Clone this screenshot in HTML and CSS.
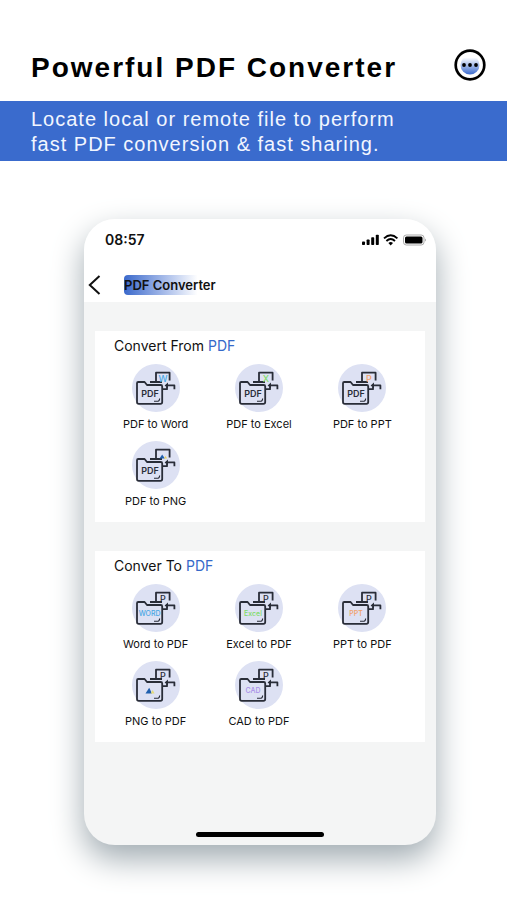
FILE: index.html
```html
<!DOCTYPE html>
<html lang="en">
<head>
<meta charset="utf-8">
<meta name="viewport" content="width=device-width, initial-scale=1">
<title>Powerful PDF Converter</title>
<link rel="stylesheet" href="styles.css">
</head>
<body>
<svg class="defs" aria-hidden="true">
  <defs>
    <symbol id="folder" viewBox="0 0 48 48">
      <circle cx="24" cy="24" r="24" fill="#dde1f3"/>
      <g fill="none" stroke="#292d38" stroke-width="1.8" stroke-linejoin="round">
        <path d="M24 18V8.7H37.6V16.5M18 18H30M30 25.2H35V23"/>
        <path d="M5 38V19.2Q5 18 6.2 18H12.6L15 21H28.8Q30.2 21 30.2 22.4V38Q30.2 39.8 28.4 39.8H6.8Q5 39.8 5 38Z"/>
        <path d="M34 21.4H42.4V25.2"/>
        <path d="M22 37.2H26Q27.6 37 27.6 34.5" stroke-width="1.1"/>
      </g>
      <path d="M32.6 21.4L36 18.6V24.2Z" fill="#292d38"/>
    </symbol>
  </defs>
</svg>
<header class="hero">
  <h1>Powerful PDF Converter</h1>
  <button class="more" type="button" aria-label="More">
    <svg viewBox="0 0 32 32" width="32" height="32" aria-hidden="true">
      <defs><linearGradient id="fade" x1="0" y1="0" x2="0" y2="1"><stop offset=".1" stop-color="#fff"/><stop offset="1" stop-color="#3b6bcf"/></linearGradient></defs>
      <circle cx="16" cy="16" r="14.3" fill="#fff" stroke="#000" stroke-width="2.7"/>
      <circle cx="16" cy="16" r="9.5" fill="url(#fade)"/>
      <circle cx="10" cy="16" r="1.9"/><circle cx="16" cy="16" r="1.9"/><circle cx="22" cy="16" r="1.9"/>
    </svg>
  </button>
</header>
<p class="banner">Locate local or remote file to perform<br>fast PDF conversion &amp; fast sharing.</p>
<main class="phone">
  <div class="top">
    <div class="status">
      <span>08:57</span>
      <svg viewBox="0 0 64 12" width="64" height="12" aria-hidden="true">
        <rect y="7.5" width="3" height="3.5" rx=".8"/><rect x="4.6" y="5.5" width="3" height="5.5" rx=".8"/><rect x="9.2" y="3.2" width="3" height="7.8" rx=".8"/><rect x="13.8" y=".8" width="3" height="10.2" rx=".8"/>
        <g fill="none" stroke="#000" stroke-width="1.9"><path d="M22 4.4Q28.7-1.8 35.4 4.4"/><path d="M24.4 7Q28.7 3.2 33 7"/></g>
        <path d="M26.4 9Q28.7 7 31 9L28.7 11.4Z"/>
        <rect x="41.5" y="1" width="20.5" height="10" rx="2.8" fill="#fff" stroke="#aaa"/>
        <rect x="43" y="2.5" width="17.5" height="7" rx="1.5"/><path d="M63 4.4Q65 6 63 7.6Z" fill="#aaa"/>
      </svg>
    </div>
    <nav class="nav">
      <button class="back" type="button" aria-label="Back"><svg viewBox="0 0 13 20" width="13" height="20" aria-hidden="true"><path d="M11.5 1L1.8 10L11.5 19" fill="none" stroke="#111" stroke-width="2"/></svg></button>
      <h2>PDF Converter</h2>
    </nav>
  </div>
  <section class="card">
    <h3>Convert From <em>PDF</em></h3>
    <div class="grid">
      <button class="tool" type="button"><svg viewBox="0 0 48 48" aria-hidden="true"><use href="#folder"/><text class="tag" x="18" y="32.5">PDF</text><text class="letter blue" x="31" y="17.5">W</text></svg>PDF to Word</button>
      <button class="tool" type="button"><svg viewBox="0 0 48 48" aria-hidden="true"><use href="#folder"/><text class="tag" x="18" y="32.5">PDF</text><text class="letter green" x="31" y="17.5">X</text></svg>PDF to Excel</button>
      <button class="tool" type="button"><svg viewBox="0 0 48 48" aria-hidden="true"><use href="#folder"/><text class="tag" x="18" y="32.5">PDF</text><text class="letter orange" x="31" y="17.5">P</text></svg>PDF to PPT</button>
      <button class="tool" type="button"><svg viewBox="0 0 48 48" aria-hidden="true"><use href="#folder"/><text class="tag" x="18" y="32.5">PDF</text><path d="M27.5 17.5L30.2 13.5L32.8 17.5Z" fill="#1f5fae"/><path d="M32 17.5L33.5 15L35 17.5Z" fill="#e6cf58"/></svg>PDF to PNG</button>
    </div>
  </section>
  <section class="card">
    <h3>Conver To <em>PDF</em></h3>
    <div class="grid">
      <button class="tool" type="button"><svg viewBox="0 0 48 48" aria-hidden="true"><use href="#folder"/><text class="name blue" x="17.6" y="32">WORD</text><text class="letter" x="31" y="17.5">P</text></svg>Word to PDF</button>
      <button class="tool" type="button"><svg viewBox="0 0 48 48" aria-hidden="true"><use href="#folder"/><text class="name green" x="18" y="32">Excel</text><text class="letter" x="31" y="17.5">P</text></svg>Excel to PDF</button>
      <button class="tool" type="button"><svg viewBox="0 0 48 48" aria-hidden="true"><use href="#folder"/><text class="name orange" x="18" y="32">PPT</text><text class="letter" x="31" y="17.5">P</text></svg>PPT to PDF</button>
      <button class="tool" type="button"><svg viewBox="0 0 48 48" aria-hidden="true"><use href="#folder"/><path d="M13.5 32.5L17.2 26.8L20 32.5Z" fill="#1f5fae"/><path d="M18.6 32.5L20.6 29L22.6 32.5Z" fill="#e6dc78"/><text class="letter" x="31" y="17.5">P</text></svg>PNG to PDF</button>
      <button class="tool" type="button"><svg viewBox="0 0 48 48" aria-hidden="true"><use href="#folder"/><text class="name purple" x="18" y="32">CAD</text><text class="letter" x="31" y="17.5">P</text></svg>CAD to PDF</button>
    </div>
  </section>
  <div class="home"></div>
</main>
</body>
</html>
```
FILE: styles.css
```css
* { box-sizing: border-box; }
body { margin: 0; background: #fff; color: #111; font-family: Inter, "Liberation Sans", sans-serif; }
h1, h2, h3, p { margin: 0; }
button { padding: 0; border: 0; background: none; color: inherit; font: inherit; cursor: pointer; }
svg { display: block; }
.defs { position: absolute; width: 0; height: 0; }
.hero { display: flex; align-items: center; justify-content: space-between; padding: 45px 21px 16px 31px; }
h1 { padding-top: 6px; color: #000; font: bold 28px/34px "Liberation Sans", sans-serif; letter-spacing: 2px; }
.banner { padding: 6px 31px 4px; background: #3a6bcd; color: #f2f6ff; font: 20px/25px "Liberation Sans", sans-serif; letter-spacing: 1px; }
.phone { display: flex; flex-direction: column; margin: 58px 71px 55px 84px; border-radius: 31px; background: #f4f5f5; box-shadow: 0 14px 32px 0 #a0abb1; overflow: hidden; }
.top { background: #fff; }
.status { display: flex; align-items: center; justify-content: space-between; padding: 11px 10px 0 21px; font-size: 14px; font-weight: 600; line-height: 20px; }
.nav { display: flex; align-items: center; gap: 23px; padding: 25px 4px 7px; }
h2 { font-size: 13px; font-weight: 600; line-height: 20px; border-radius: 4px; background: linear-gradient(90deg, #3b69cb, #a9bdea 45%, #fff 80%); }
.card { margin: 29px 11px 0; padding: 5px 11px 13px 9px; background: #fff; }
h3 { padding-left: 10px; font-size: 14px; font-weight: 400; line-height: 20px; }
em { color: #3569c9; font-style: normal; }
.grid { display: grid; grid-template-columns: repeat(3, 1fr); gap: 9px 0; padding-top: 8px; }
.tool { display: flex; flex-direction: column; align-items: center; gap: 4px; font-size: 11px; line-height: 16px; }
.tool svg { width: 48px; height: 48px; }
text { fill: #292d38; text-anchor: middle; font-family: Inter, sans-serif; }
.tag { font-size: 9px; font-weight: 600; }
.letter { font-size: 9px; font-weight: 500; }
.name { font-size: 7px; font-weight: 500; }
.blue { fill: #4aa7e4; }
.green { fill: #7fdc68; }
.orange { fill: #f2a067; }
.purple { fill: #a98fe8; }
.home { width: 128px; height: 5px; margin: 90px auto 8px; border-radius: 3px; background: #000; }
```
